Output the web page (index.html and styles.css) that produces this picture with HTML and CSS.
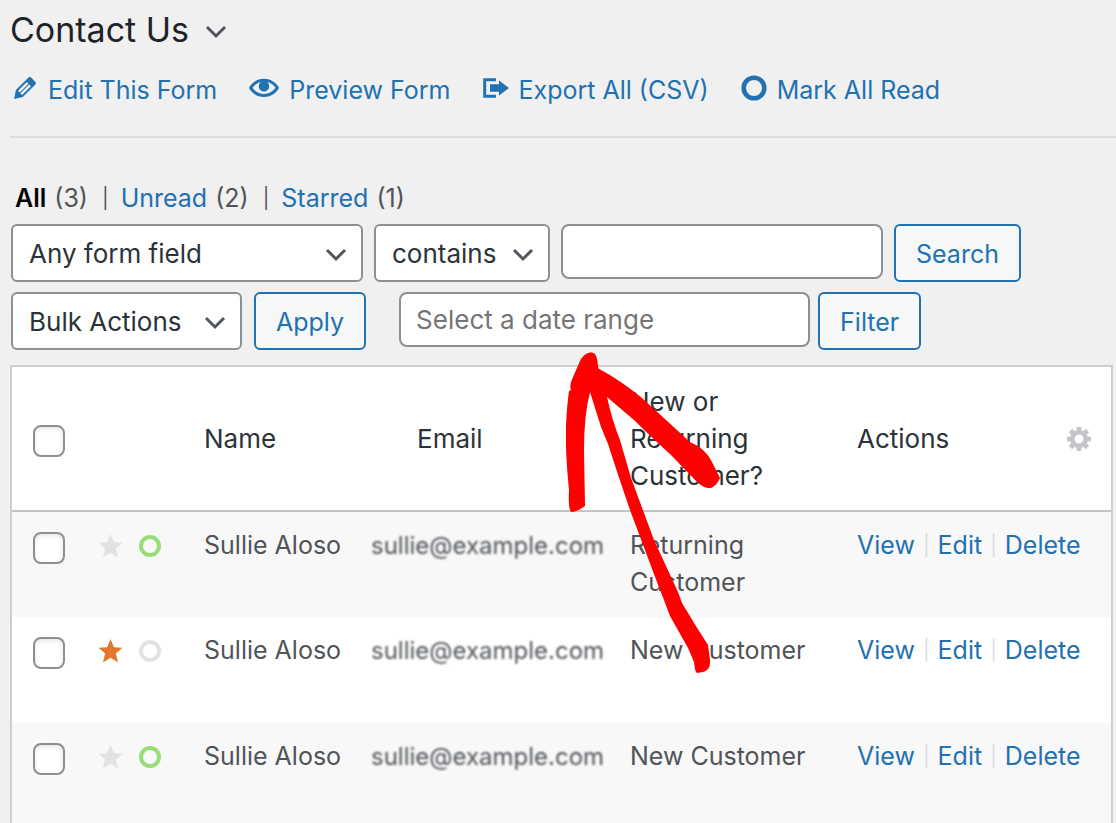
FILE: index.html
```html
<!DOCTYPE html>
<html lang="en">
<head>
    <meta charset="UTF-8">
    <meta name="viewport" content="width=device-width, initial-scale=1.0">
    <title>Contact Us - Entries</title>
    <link rel="stylesheet" href="styles.css">
</head>
<body>
    <!-- shared icons -->
    <svg class="defs" width="0" height="0">
        <symbol id="chevron" viewBox="0 0 22 14">
            <path d="M2 2l9 9 9-9" fill="none" stroke="currentColor" stroke-width="3"/>
        </symbol>
        <symbol id="star" viewBox="0 0 24 24">
            <path d="M12 0l3.4 8.3 8.6.5-6.6 5.7 2.1 8.9-7.5-4.7-7.5 4.7 2.1-8.9L0 8.8l8.6-.5z" fill="currentColor"/>
        </symbol>
        <symbol id="ring" viewBox="0 0 22 22">
            <circle cx="11" cy="11" r="9" fill="none" stroke="currentColor" stroke-width="4"/>
        </symbol>
    </svg>

    <header class="page-header">
        <h1>Contact Us</h1>
        <button class="form-switch" aria-label="Switch form"><svg class="chevron"><use href="#chevron"/></svg></button>
    </header>

    <nav class="form-actions">
        <a href="#edit">
            <svg width="24" height="22" viewBox="3 3 14 14" preserveAspectRatio="xMinYMid"><path fill="currentColor" d="M13.89 3.39l2.71 2.72c.46.46.42 1.24.03 1.64l-8.01 8.02-5.56 1.16 1.16-5.58s7.6-7.63 7.99-8.03c.39-.39 1.22-.39 1.68.07zm-2.73 2.79l-5.59 5.61 1.11 1.11 5.54-5.65zm-2.97 8.23l5.58-5.6-1.07-1.08-5.59 5.6z"/></svg>
            <span>Edit This Form</span>
        </a>
        <a href="#preview">
            <svg width="30" height="20" viewBox="0 3.6 20 13"><path fill="currentColor" d="M19.7 9.4C17.7 6 14 3.9 10 3.9S2.3 6 .3 9.4L0 10l.3.6c2 3.4 5.7 5.5 9.7 5.5s7.7-2.1 9.7-5.5l.3-.6-.3-.6zM10 14.1c-3.1 0-6-1.6-7.7-4.1C3.6 8 5.7 6.6 8 6.1c-.9.6-1.5 1.7-1.5 2.9 0 1.9 1.6 3.5 3.5 3.5s3.5-1.6 3.5-3.5c0-1.2-.6-2.3-1.5-2.9 2.3.5 4.4 1.9 5.7 3.9-1.7 2.5-4.6 4.1-7.7 4.1z"/></svg>
            <span>Preview Form</span>
        </a>
        <a href="#export">
            <svg width="26" height="20" viewBox="0 0 26 20"><path d="M13 1.8H1.7v16.4H13" fill="none" stroke="currentColor" stroke-width="3"/><path fill="currentColor" d="M7 6.2h9V2.6l10 7.4-10 7.4v-3.6H7z"/></svg>
            <span>Export All (CSV)</span>
        </a>
        <a href="#read">
            <svg width="26" height="26" viewBox="0 0 26 26"><circle cx="13" cy="13" r="10.3" fill="none" stroke="currentColor" stroke-width="4.6"/></svg>
            <span>Mark All Read</span>
        </a>
    </nav>

    <main>
        <ul class="views">
            <li><a href="#all" class="current">All</a> (3)</li>
            <li><a href="#unread">Unread</a> (2)</li>
            <li><a href="#starred">Starred</a> (1)</li>
        </ul>

        <form class="toolbar search-bar">
            <div class="select select-field">
                <select aria-label="Form field"><option>Any form field</option></select>
                <svg class="chevron"><use href="#chevron"/></svg>
            </div>
            <div class="select select-compare">
                <select aria-label="Comparison"><option>contains</option></select>
                <svg class="chevron"><use href="#chevron"/></svg>
            </div>
            <input type="text" class="search-term" aria-label="Search term">
            <button type="button" class="button">Search</button>
        </form>

        <form class="toolbar bulk-bar">
            <div class="select select-bulk">
                <select aria-label="Bulk actions"><option>Bulk Actions</option></select>
                <svg class="chevron"><use href="#chevron"/></svg>
            </div>
            <button type="button" class="button">Apply</button>
            <div class="date-filter">
                <input type="text" class="date-range" placeholder="Select a date range" aria-label="Date range">
                <button type="button" class="button">Filter</button>
            </div>
        </form>

        <div class="entries">
            <table>
                <colgroup>
                    <col class="col-check">
                    <col class="col-icons">
                    <col class="col-name">
                    <col class="col-email">
                    <col class="col-customer">
                    <col>
                </colgroup>
                <thead>
                    <tr>
                        <th><input type="checkbox" aria-label="Select all"></th>
                        <th></th>
                        <th>Name</th>
                        <th class="email-head">Email</th>
                        <th>New or Returning Customer?</th>
                        <th>
                            <div class="actions-head">
                                Actions
                                <button class="gear" aria-label="Columns">
                                    <svg width="24" height="24" viewBox="-12 -12 24 24" stroke="currentColor" fill="none">
                                        <circle r="6.8" stroke-width="4.6"/>
                                        <path stroke-width="4.6" d="M0-12v4M0 12V8M-12 0h4M12 0H8M-8.5-8.5l3 3M8.5-8.5l-3 3M-8.5 8.5l3-3M8.5 8.5l-3-3"/>
                                    </svg>
                                </button>
                            </div>
                        </th>
                    </tr>
                </thead>
                <tbody>
                    <tr>
                        <td><input type="checkbox" aria-label="Select entry"></td>
                        <td><div class="flags"><svg class="star"><use href="#star"/></svg><svg class="ring unread"><use href="#ring"/></svg></div></td>
                        <td>Sullie Aloso</td>
                        <td class="email"><span>sullie@example.com</span></td>
                        <td>Returning Customer</td>
                        <td><div class="row-actions"><a href="#view">View</a><a href="#edit">Edit</a><a href="#delete">Delete</a></div></td>
                    </tr>
                    <tr>
                        <td><input type="checkbox" aria-label="Select entry"></td>
                        <td><div class="flags"><svg class="star starred"><use href="#star"/></svg><svg class="ring"><use href="#ring"/></svg></div></td>
                        <td>Sullie Aloso</td>
                        <td class="email"><span>sullie@example.com</span></td>
                        <td>New Customer</td>
                        <td><div class="row-actions"><a href="#view">View</a><a href="#edit">Edit</a><a href="#delete">Delete</a></div></td>
                    </tr>
                    <tr>
                        <td><input type="checkbox" aria-label="Select entry"></td>
                        <td><div class="flags"><svg class="star"><use href="#star"/></svg><svg class="ring unread"><use href="#ring"/></svg></div></td>
                        <td>Sullie Aloso</td>
                        <td class="email"><span>sullie@example.com</span></td>
                        <td>New Customer</td>
                        <td><div class="row-actions"><a href="#view">View</a><a href="#edit">Edit</a><a href="#delete">Delete</a></div></td>
                    </tr>
                </tbody>
            </table>

            <!-- hand drawn arrow to the date range -->
            <svg class="arrow" width="154" height="322" viewBox="566 352 154 322">
                <path fill="#f00" d="M590 352.5C594 352 596 354 597 359L598.5 368.5Q620 380 642 398L690 442Q705 448 712 462L720 478C717 485 712 489 708 488Q702 487 696 481L671 455Q650 436 634 420L607 397Q612 420 620 440L631 478L654 540L678 592L682 603Q695 625 708 645L710 660Q711 670 703 672L697 673Q695 672 694 662L688 648L670 616Q664 600 657 582L630 510Q618 475 608 444L601 427L590 392Q584 415 584 450L585 506Q577 512 571 512Q568 508 569 490Q565 450 566 425Q567 405 569 391L571 390Q569 385 573 377L580 361Q583 354 590 352.5z"/>
            </svg>
        </div>
    </main>
</body>
</html>
```
FILE: styles.css
```css
* {
  box-sizing: border-box;
}

body {
  margin: 0;
  padding: 8px 0 0 10px;
  background: #f0f0f0;
  color: #505459;
  font-family: Inter, "Liberation Sans", sans-serif;
  font-size: 25px;
  line-height: 37px;
}

.defs {
  position: absolute;
}

svg {
  flex: none;
}

a {
  color: #2271b1;
  text-decoration: none;
}

button,
input,
select {
  margin: 0;
  font: inherit;
}

.chevron {
  width: 22px;
  height: 14px;
  color: #50575e;
}

.page-header {
  display: flex;
  align-items: center;
  gap: 16px;
}

h1 {
  margin: 0;
  font-size: 34px;
  font-weight: 400;
  line-height: 44px;
  color: #1d2327;
}

.form-switch {
  display: flex;
  padding: 4px 0 0;
  border: 0;
  background: none;
}

.form-actions {
  display: flex;
  gap: 32px;
  padding: 20px 4px 27px;
  border-bottom: 2px solid #dcdcde;
}

.form-actions a {
  display: flex;
  align-items: center;
  gap: 10px;
  white-space: nowrap;
}

.form-actions svg {
  margin-bottom: 6px;
}

main {
  padding-right: 3px;
}

.views {
  display: flex;
  margin: 0;
  padding: 42px 5px 7px;
  list-style: none;
}

.views li {
  display: flex;
  gap: 8px;
}

.views li + li::before {
  content: "|";
  padding: 0 4px 0 14px;
  font-size: 20px;
}

.views .current {
  color: #000;
  font-weight: 600;
}

.toolbar {
  display: flex;
  align-items: flex-start;
  padding-left: 1px;
}

.search-bar {
  gap: 11px;
  padding-bottom: 10px;
}

.bulk-bar {
  gap: 12px;
  padding-bottom: 15px;
}

.select {
  position: relative;
}

.select select {
  width: 100%;
  height: 58px;
  padding: 0 16px;
  border: 2px solid #8c8f94;
  border-radius: 6px;
  background: #fff;
  color: #2c3338;
  font-size: 26px;
  appearance: none;
}

.select .chevron {
  position: absolute;
  right: 16px;
  top: 24px;
  pointer-events: none;
}

.select-field {
  width: 352px;
}

.select-compare {
  width: 176px;
}

.select-bulk {
  width: 231px;
}

input[type="text"] {
  height: 55px;
  padding: 0 15px;
  border: 2px solid #8c8f94;
  border-radius: 8px;
  background: #fff;
  color: #2c3338;
  font-size: 26px;
}

input::placeholder {
  color: #757575;
  opacity: 1;
}

.search-term {
  width: 322px;
}

.date-filter {
  display: flex;
  align-items: flex-start;
  gap: 8px;
  margin-left: 21px;
}

.date-range {
  width: 411px;
}

.button {
  height: 58px;
  padding: 2px 20px 0;
  border: 2px solid #2271b1;
  border-radius: 6px;
  background: #f6f7f7;
  color: #2271b1;
}

.entries {
  position: relative;
  border: 2px solid #cdced0;
  background: #fff;
}

table {
  width: 100%;
  table-layout: fixed;
  border-collapse: collapse;
}

.col-check {
  width: 86px;
}

.col-icons {
  width: 106px;
}

.col-name {
  width: 167px;
}

.col-email {
  width: 259px;
}

.col-customer {
  width: 227px;
}

th,
td {
  padding: 16px 0;
  text-align: left;
  vertical-align: top;
}

th {
  border-bottom: 2px solid #c3c4c7;
  color: #2c3338;
  font-size: 26px;
  font-weight: 400;
  vertical-align: middle;
}

td {
  height: 106px;
  padding-top: 15px;
}

th:first-child,
td:first-child {
  padding-left: 21px;
}

th:nth-child(5),
td:nth-child(5) {
  padding-right: 30px;
}

tbody tr:nth-child(odd) {
  background: #f8f8f8;
}

.email-head {
  padding-left: 46px;
}

.email span {
  font-size: 24px;
  filter: blur(1px);
}

input[type="checkbox"] {
  display: block;
  width: 32px;
  height: 32px;
  margin-top: 5px;
  border: 2px solid #8c8f94;
  border-radius: 8px;
  background: #fff;
  box-shadow: inset 0 2px 4px rgba(0, 0, 0, 0.1);
  appearance: none;
}

.flags {
  display: flex;
  align-items: center;
  gap: 16px;
  height: 37px;
}

.star {
  width: 25px;
  height: 24px;
  color: #e2e2e3;
}

.starred {
  color: #e27730;
}

.ring {
  width: 22px;
  height: 22px;
  color: #e2e2e3;
}

.unread {
  color: #99dd77;
}

.actions-head {
  display: flex;
  align-items: center;
  justify-content: space-between;
  padding-right: 20px;
}

.gear {
  display: flex;
  padding: 0;
  border: 0;
  background: none;
  color: #c3c4c7;
}

.row-actions {
  display: flex;
  white-space: nowrap;
}

.row-actions a {
  display: flex;
}

.row-actions a + a::before {
  content: "|";
  padding: 0 8px;
  color: #dcdcde;
  font-size: 20px;
}

.arrow {
  position: absolute;
  left: 554px;
  top: -15px;
  pointer-events: none;
}
```
